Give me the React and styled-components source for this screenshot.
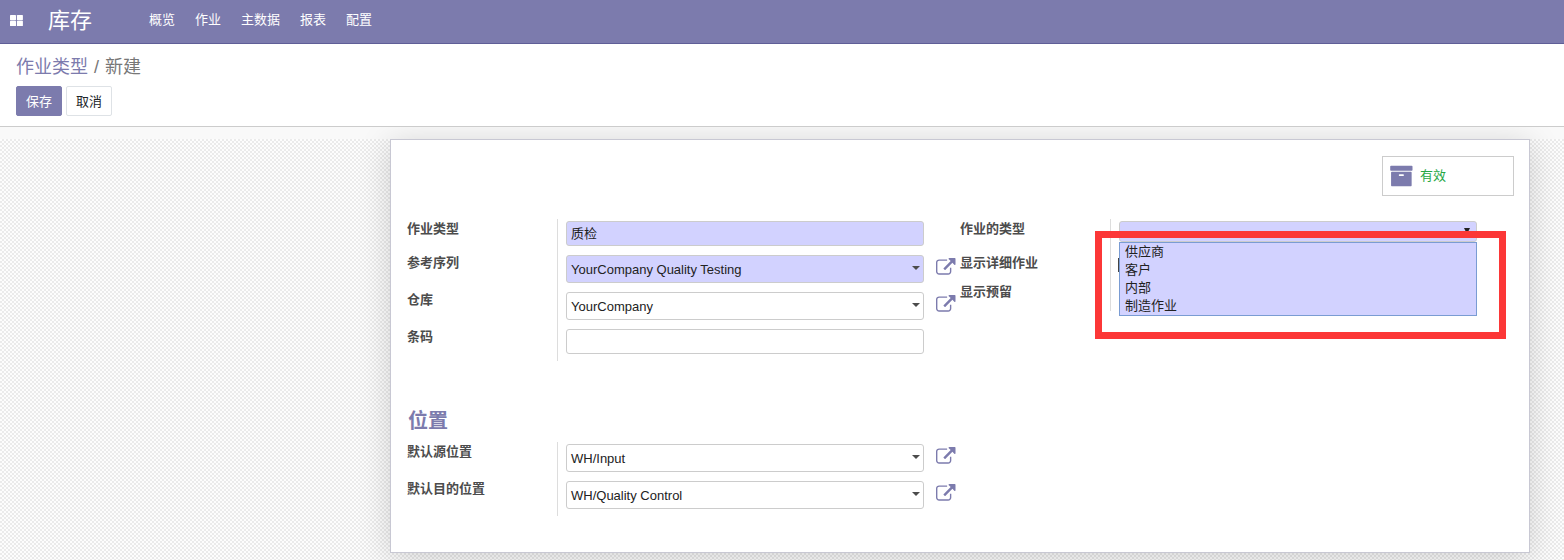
import React from "react";
import styled, { createGlobalStyle } from "styled-components";

const Global = createGlobalStyle`
  * { box-sizing: border-box; }
  html, body { margin: 0; height: 100%; overflow: hidden; }
  body {
    font: 13px/18px "Liberation Sans", "Noto Sans CJK SC", sans-serif;
    color: #222;
    background: #fff;
  }
`;

const Page = styled.div`
  display: flex;
  flex-direction: column;
  height: 560px;
  overflow: hidden;
`;

const Navbar = styled.header`
  flex: none;
  display: flex;
  align-items: center;
  height: 44px;
  padding: 0 0 3px 10px;
  background: #7c7bad;
  border-bottom: 1px solid #5f5e97;
  color: #fff;
`;

const Brand = styled.div`
  width: 101px;
  margin-left: 25px;
  padding-top: 1px;
  font-size: 22px;
  line-height: 32px;
`;

const Menu = styled.nav`
  display: flex;
  gap: 20px;
`;

const MenuItem = styled.a`
  color: #fff;
`;

const ControlPanel = styled.section`
  flex: none;
  height: 83px;
  padding: 10px 16px 0;
  border-bottom: 1px solid #ccc;
`;

const Breadcrumb = styled.div`
  display: flex;
  gap: 6px;
  font-size: 18px;
  line-height: 26px;
  color: #777;
`;

const Crumb = styled.a`
  color: #7c7bad;
`;

const Buttons = styled.div`
  display: flex;
  gap: 4px;
  margin-top: 6px;
`;

const Button = styled.button`
  width: 46px;
  height: 30px;
  padding: 1px 0 0;
  border: 1px solid ${(p) => (p.$primary ? "#7c7bad" : "#dee2e6")};
  border-radius: 2px;
  background: ${(p) => (p.$primary ? "#7c7bad" : "#fff")};
  color: ${(p) => (p.$primary ? "#fff" : "#212529")};
  font: inherit;
`;

const Content = styled.main`
  flex: 1;
  overflow: hidden;
  padding: 12px 34px 0 390px;
  background: linear-gradient(#f9f9f9, #f9f9f9) 0 0 / 100% 12px no-repeat,
    repeating-conic-gradient(#ebebeb 0 25%, #fdfdfd 0 50%) 0 0 / 4px 4px;
`;

const Sheet = styled.section`
  height: 414px;
  padding: 16px 15px 0 16px;
  background: #fff;
  border: 1px solid #c8c8d3;
  box-shadow: 0 5px 30px rgba(0, 0, 0, 0.17);
`;

const StatButton = styled.div`
  display: flex;
  align-items: center;
  gap: 6px;
  width: 132px;
  height: 40px;
  margin-left: auto;
  padding-left: 7px;
  border: 1px solid #ccc;
  color: #28a745;
`;

const Groups = styled.div`
  display: flex;
  margin-top: 23px;
`;

const Group = styled.div`
  width: 553px;
`;

const Row = styled.div`
  display: flex;
  height: ${(p) => p.$h}px;
`;

const Label = styled.label`
  width: 150px;
  padding-top: 1px;
  font-weight: 700;
  color: #4c4c4c;
`;

const Cell = styled.div`
  flex: 1;
  display: flex;
  align-items: flex-start;
  padding: 2px 0 0 8px;
  border-left: 1px solid #ddd;
`;

const Field = styled.div`
  position: relative;
  display: flex;
  align-items: center;
  justify-content: space-between;
  width: 358px;
  height: ${(p) => (p.$select ? 28 : 25)}px;
  padding: 1px 3px 0 4px;
  border: 1px solid #ccc;
  border-radius: 3px;
  background: ${(p) => (p.$required ? "#d2d2ff" : "#fff")};
`;

const Caret = styled.i`
  margin-top: -4px;
  border: 4px solid transparent;
  border-top-color: #4c4c4c;
  border-bottom: 0;
`;

const Native = styled(Field)`
  height: 21px;
  padding: 0 6px 0 4px;
  justify-content: flex-end;
`;

const NativeArrow = styled.i`
  margin-top: -2px;
  border: 3px solid transparent;
  border-top: 6px solid #222;
  border-bottom: 0;
`;

const OptionList = styled.ul`
  position: absolute;
  z-index: 2;
  top: 20px;
  left: -1px;
  width: 358px;
  height: 74px;
  margin: 0;
  padding: 0 5px;
  list-style: none;
  background: #d2d2ff;
  border: 1px solid #7a9cd3;
`;

const Option = styled.li`
  height: 18px;
`;

const Highlight = styled.div`
  position: absolute;
  z-index: 3;
  top: 9px;
  left: -25px;
  width: 411px;
  height: 108px;
  border: 7px solid #fc3737;
`;

const Checkbox = styled.span`
  width: 13px;
  height: 14px;
  margin-top: 3px;
  margin-left: -1px;
  border: 1px solid #444;
`;

const LinkIcon = styled.svg`
  width: 19.5px;
  height: 19.5px;
  margin: 3px 0 0 12px;
  fill: #7c7bad;
`;

const Heading = styled.h2`
  height: 30px;
  margin: 45px 0 0;
  padding-left: 1px;
  font-size: 20px;
  line-height: 31px;
  color: #7c7bad;
`;

const Section = styled.div`
  width: 553px;
  margin-top: 6px;
`;

const External = () => (
  <LinkIcon viewBox="0 0 1792 1792">
    <path d="M1408 928v320q0 119-84.5 203.5t-203.5 84.5h-832q-119 0-203.5-84.5t-84.5-203.5v-832q0-119 84.5-203.5t203.5-84.5h704q14 0 23 9t9 23v64q0 14-9 23t-23 9h-704q-66 0-113 47t-47 113v832q0 66 47 113t113 47h832q66 0 113-47t47-113v-320q0-14 9-23t23-9h64q14 0 23 9t9 23zm384-864v512q0 26-19 45t-45 19-45-19l-176-176-652 652q-10 10-23 10t-23-10l-114-114q-10-10-10-23t10-23l652-652-176-176q-19-19-19-45t19-45 45-19h512q26 0 45 19t19 45z" />
  </LinkIcon>
);

const InputRow = ({ label, value, required }) => (
  <Row $h={34}>
    <Label>{label}</Label>
    <Cell><Field $required={required}>{value}</Field></Cell>
  </Row>
);

const SelectRow = ({ label, value, required }) => (
  <Row $h={37}>
    <Label>{label}</Label>
    <Cell>
      <Field $select $required={required}>{value}<Caret /></Field>
      <External />
    </Cell>
  </Row>
);

const MENU = ["概览", "作业", "主数据", "报表", "配置"];
const OPTIONS = ["供应商", "客户", "内部", "制造作业"];

export default function App() {
  return (
    <Page>
      <Global />
      <Navbar>
        <svg width="13" height="11" viewBox="0 0 13 11" fill="#fff">
          <rect width="6" height="5.2" rx=".6" />
          <rect x="6.9" width="6" height="5.2" rx=".6" />
          <rect y="5.8" width="6" height="5.2" rx=".6" />
          <rect x="6.9" y="5.8" width="6" height="5.2" rx=".6" />
        </svg>
        <Brand>库存</Brand>
        <Menu>{MENU.map((m) => <MenuItem key={m}>{m}</MenuItem>)}</Menu>
      </Navbar>
      <ControlPanel>
        <Breadcrumb><Crumb>作业类型</Crumb><span>/</span><span>新建</span></Breadcrumb>
        <Buttons>
          <Button $primary>保存</Button>
          <Button>取消</Button>
        </Buttons>
      </ControlPanel>
      <Content>
        <Sheet>
          <StatButton>
            <svg width="24" height="24" viewBox="48 0 1792 1792" fill="#7c7bad">
              <path d="M1088 832q0-26-19-45t-45-19h-256q-26 0-45 19t-19 45 19 45 45 19h256q26 0 45-19t19-45zm576-192v960q0 26-19 45t-45 19h-1408q-26 0-45-19t-19-45v-960q0-26 19-45t45-19h1408q26 0 45 19t19 45zm64-448v256q0 26-19 45t-45 19h-1536q-26 0-45-19t-19-45v-256q0-26 19-45t45-19h1536q26 0 45 19t19 45z" />
            </svg>
            有效
          </StatButton>
          <Groups>
            <Group>
              <InputRow label="作业类型" value="质检" required />
              <SelectRow label="参考序列" value="YourCompany Quality Testing" required />
              <SelectRow label="仓库" value="YourCompany" />
              <InputRow label="条码" />
            </Group>
            <Group>
              <Row $h={34}>
                <Label>作业的类型</Label>
                <Cell>
                  <Native $required>
                    <NativeArrow />
                    <OptionList>{OPTIONS.map((o) => <Option key={o}>{o}</Option>)}</OptionList>
                    <Highlight />
                  </Native>
                </Cell>
              </Row>
              <Row $h={29}><Label>显示详细作业</Label><Cell><Checkbox /></Cell></Row>
              <Row $h={29}><Label>显示预留</Label><Cell /></Row>
            </Group>
          </Groups>
          <Heading>位置</Heading>
          <Section>
            <SelectRow label="默认源位置" value="WH/Input" />
            <SelectRow label="默认目的位置" value="WH/Quality Control" />
          </Section>
        </Sheet>
      </Content>
    </Page>
  );
}
